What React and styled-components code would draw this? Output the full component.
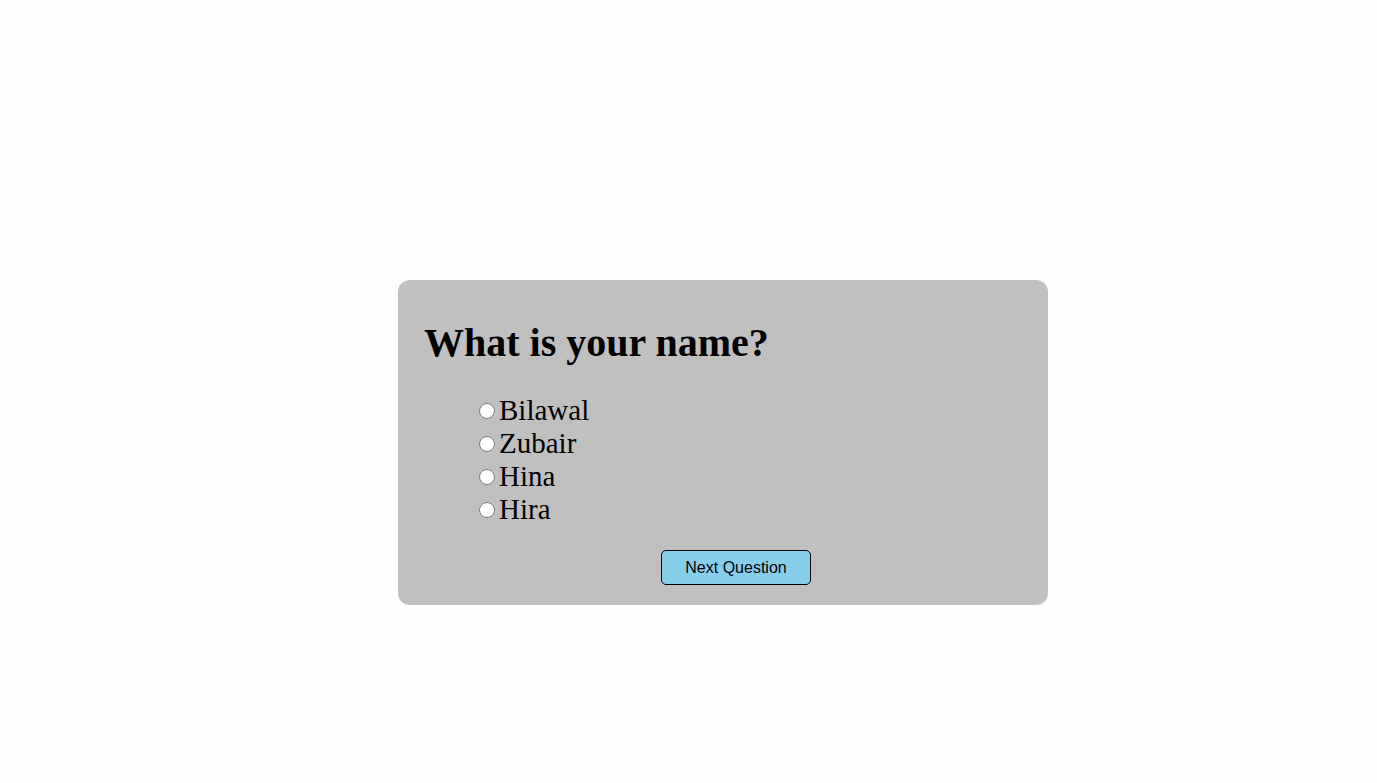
import styled, { createGlobalStyle } from "styled-components";

const GlobalStyle = createGlobalStyle`
  body {
    margin: 0;
    background: #fefefe;
    font-family: "Liberation Serif", "Times New Roman", serif;
  }
`;

const Page = styled.div`
  min-height: 783px;
  padding: 280px 0 0 398px;
  box-sizing: border-box;
`;

const Card = styled.div`
  width: 650px;
  box-sizing: border-box;
  background: #c0c0c0;
  border-radius: 12px;
  padding: 40px 26px 20px;
`;

const Question = styled.h1`
  margin: 0;
  font-size: 40px;
  line-height: 46px;
  font-weight: bold;
  color: #000;
`;

const Options = styled.ul`
  list-style: none;
  margin: 28px 0 0;
  padding: 0 0 0 55px;
`;

const Option = styled.li`
  display: flex;
  align-items: center;
  font-size: 29px;
  line-height: 33px;
  color: #000;
`;

const Radio = styled.input`
  width: 16px;
  height: 16px;
  margin: 0 4px 0 0;
`;

const ButtonRow = styled.div`
  display: flex;
  padding-left: 237px;
  margin-top: 24px;
`;

const NextButton = styled.button`
  width: 150px;
  height: 35px;
  background: #87ceeb;
  border: 1px solid #000;
  border-radius: 5px;
  font-family: "Liberation Sans", Arial, sans-serif;
  font-size: 16px;
  color: #000;
`;

const options = ["Bilawal", "Zubair", "Hina", "Hira"];

export default function App() {
  return (
    <Page>
      <GlobalStyle />
      <Card>
        <Question>What is your name?</Question>
        <Options>
          {options.map((o) => (
            <Option key={o}>
              <Radio type="radio" name="answer" value={o} />
              {o}
            </Option>
          ))}
        </Options>
        <ButtonRow>
          <NextButton>Next Question</NextButton>
        </ButtonRow>
      </Card>
    </Page>
  );
}
